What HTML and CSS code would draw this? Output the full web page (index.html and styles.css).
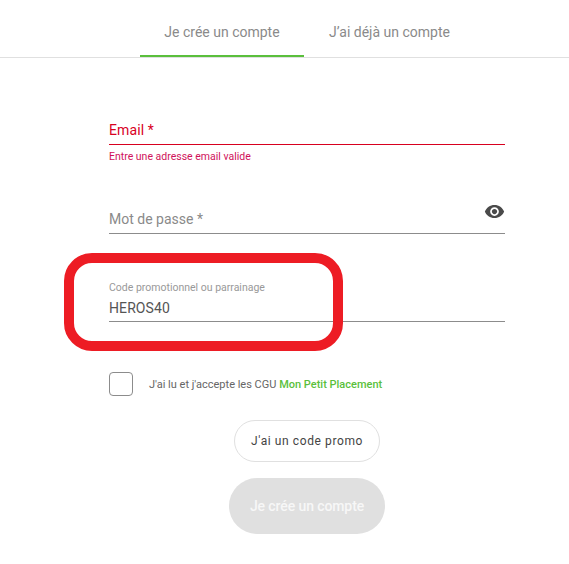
FILE: index.html
```html
<!DOCTYPE html>
<html lang="fr">

<head>
    <meta charset="UTF-8">
    <meta name="viewport" content="width=device-width, initial-scale=1.0">
    <title>Je crée un compte</title>
    <link rel="stylesheet" href="styles.css">
</head>

<body>
    <div class="tabs">
        <a class="tab tab-active">Je crée un compte</a>
        <a class="tab">J’ai déjà un compte</a>
    </div>

    <form class="signup-form">
        <div class="field field-error">
            <div class="field-value">Email *</div>
        </div>
        <div class="field-message">Entre une adresse email valide</div>

        <div class="field field-password">
            <div class="field-value field-placeholder">Mot de passe *</div>
            <svg class="eye-icon" viewBox="0 0 24 24" width="24" height="24">
                <path d="M12 4.5C7 4.5 2.73 7.61 1 12c1.73 4.39 6 7.5 11 7.5s9.27-3.11 11-7.5c-1.73-4.39-6-7.5-11-7.5zM12 17c-2.76 0-5-2.24-5-5s2.24-5 5-5 5 2.24 5 5-2.24 5-5 5zm0-8c-1.66 0-3 1.34-3 3s1.34 3 3 3 3-1.34 3-3-1.34-3-3-3z"/>
            </svg>
        </div>

        <div class="field field-promo">
            <div class="field-label">Code promotionnel ou parrainage</div>
            <div class="field-value">HEROS40</div>
            <div class="highlight-box"></div>
        </div>

        <div class="terms">
            <span class="checkbox"></span>
            <span class="terms-text">J'ai lu et j'accepte les CGU <a class="terms-link">Mon Petit Placement</a></span>
        </div>

        <div class="actions">
            <button type="button" class="btn-outline">J'ai un code promo</button>
            <button type="button" class="btn-primary" disabled>Je crée un compte</button>
        </div>
    </form>
</body>

</html>
```

FILE: styles.css
```css
body {
    font-family: Roboto, "Liberation Sans", sans-serif;
    background-color: #fff;
    margin: 0;
    padding: 0;
}

.tabs {
    display: flex;
    padding-left: 140px;
    height: 57px;
    border-bottom: 1px solid #e0e0e0;
}

.tab {
    display: flex;
    align-items: center;
    justify-content: center;
    box-sizing: border-box;
    height: 57px;
    padding-top: 9px;
    padding-bottom: 2px;
    width: 164px;
    font-size: 14px;
    color: #8a8a8a;
}

.tab + .tab {
    width: 165px;
    margin-left: 3px;
}

.tab-active {
    border-bottom: 2px solid #5abf3c;
    padding-bottom: 0;
}

.signup-form {
    width: 396px;
    margin-left: 109px;
}

.field {
    position: relative;
    border-bottom: 1px solid #8c8c8c;
    box-sizing: border-box;
}

.field-value {
    font-size: 14px;
    line-height: 20px;
    letter-spacing: 0.1px;
    color: #555;
}

.field-placeholder {
    color: #8a8a8a;
    letter-spacing: 0;
}

.field-error {
    margin-top: 63px;
    height: 24px;
    border-bottom-color: #d8001f;
}

.field-error .field-value {
    color: #d8001f;
    position: relative;
    top: -1px;
}

.field-message {
    margin-top: 5px;
    font-size: 10.5px;
    line-height: 14px;
    color: #d0125b;
}

.field-password {
    margin-top: 46px;
    height: 24px;
}

.field-password .field-value {
    position: relative;
    top: -1px;
}

.eye-icon {
    position: absolute;
    right: 0;
    top: -9px;
    width: 21px;
    height: 21px;
    fill: #4a4a4a;
}

.field-promo {
    margin-top: 47px;
    height: 41px;
}

.field-label {
    font-size: 10.5px;
    line-height: 14px;
    color: #999;
    margin-bottom: 3px;
}

.highlight-box {
    position: absolute;
    left: -45px;
    top: -28px;
    width: 279px;
    height: 98px;
    box-sizing: border-box;
    border: 10px solid #ed1c24;
    border-radius: 28px;
}

.terms {
    display: flex;
    align-items: center;
    margin-top: 50px;
}

.checkbox {
    box-sizing: border-box;
    width: 24px;
    height: 24px;
    border: 1px solid #8c8c8c;
    border-radius: 4px;
}

.terms-text {
    margin-left: 16px;
    font-size: 11px;
    color: #666;
}

.terms-link {
    color: #5abf3c;
    font-weight: 500;
}

.actions {
    display: flex;
    flex-direction: column;
    align-items: center;
    margin-top: 24px;
    gap: 16px;
}

.btn-outline {
    box-sizing: border-box;
    width: 146px;
    height: 42px;
    background-color: #fff;
    border: 1px solid #e0e0e0;
    border-radius: 21px;
    font-family: inherit;
    font-size: 12px;
    letter-spacing: 0.6px;
    color: #444;
}

.btn-primary {
    box-sizing: border-box;
    width: 156px;
    height: 56px;
    background-color: #e0e0e0;
    border: none;
    border-radius: 28px;
    font-family: inherit;
    font-size: 14px;
    font-weight: 500;
    letter-spacing: -0.1px;
    color: #f7f7f7;
}
```
